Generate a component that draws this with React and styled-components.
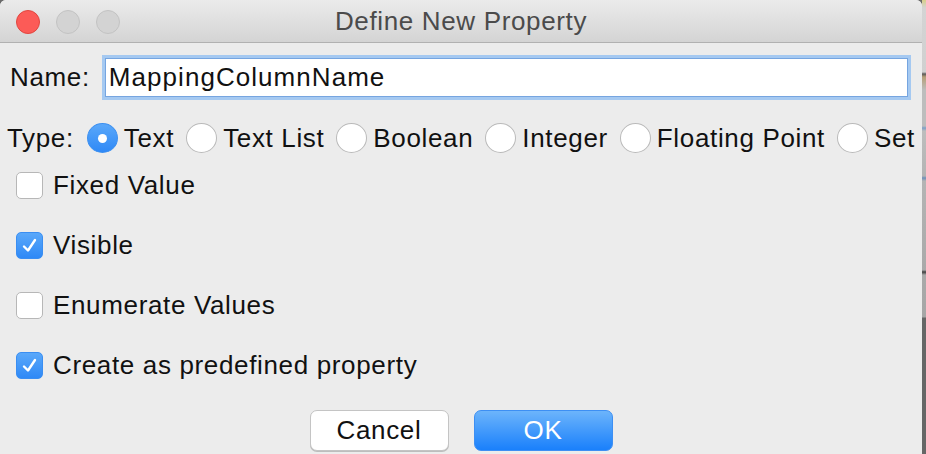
import React from "react";
import styled, { createGlobalStyle } from "styled-components";

const Global = createGlobalStyle`
  html, body { margin: 0; padding: 0; }
  body {
    background: #6a6a6a;
    font-family: "Liberation Sans", Arial, Helvetica, sans-serif;
    overflow: hidden;
  }
`;

const Screen = styled.div`
  display: flex;
  width: 926px;
  height: 454px;
`;

const Backdrop = styled.div`
  flex: 1;
  background: linear-gradient(
    to bottom,
    #d8cf8a 0px,
    #d4d4d4 8px,
    #d0d0d0 72px,
    #5a5a5a 74px,
    #b69f78 77px,
    #bdbdbd 90px,
    #bdbdbd 126px,
    #7e9fc6 128px,
    #bdbdbd 131px,
    #b4b4b4 176px,
    #6f8fb8 178px,
    #b4b4b4 181px,
    #a9a9a9 270px,
    #3e3e3e 272px,
    #a9a9a9 275px,
    #a6a6a6 317px,
    #666666 318px,
    #666666 100%
  );
`;

const Window = styled.div`
  width: 922px;
  height: 454px;
  background: #ececec;
  border-radius: 6px 6px 0 0;
  overflow: hidden;
  display: flex;
  flex-direction: column;
  letter-spacing: 0.65px;
`;

const TitleBar = styled.div`
  height: 42px;
  flex: none;
  display: grid;
  grid-template-columns: 1fr auto 1fr;
  align-items: center;
  background: linear-gradient(to bottom, #ebebeb, #d4d4d4);
  border-bottom: 1px solid #b1b1b1;
`;

const Lights = styled.div`
  display: flex;
  gap: 16px;
  padding-left: 16px;
  padding-top: 1px;
`;

const Light = styled.span`
  width: 24px;
  height: 24px;
  border-radius: 50%;
  box-sizing: border-box;
  background: ${(p) => (p.$red ? "#fc5b57" : "#d3d3d3")};
  border: 1px solid ${(p) => (p.$red ? "#e2463f" : "#c3c3c3")};
`;

const Title = styled.div`
  font-size: 26px;
  color: #4b4b4b;
  white-space: nowrap;
`;

const Content = styled.div`
  display: flex;
  flex-direction: column;
  padding-top: 15px;
  font-size: 26px;
  color: #111;
`;

const NameRow = styled.div`
  display: flex;
  align-items: center;
  padding: 0 14px 0 10px;
  gap: 15px;
`;

const Label = styled.span`
  white-space: nowrap;
`;

const TextField = styled.div`
  flex: 1;
  height: 39px;
  box-sizing: border-box;
  background: #fff;
  border: 1px solid #76a5e0;
  box-shadow: 0 0 0 3px #a5c9f1;
  display: flex;
  align-items: center;
  padding-left: 3px;
  letter-spacing: 1.05px;
  white-space: nowrap;
`;

const TypeRow = styled.div`
  display: flex;
  align-items: center;
  margin-top: 26px;
  padding-left: 7px;
  height: 30px;
  white-space: nowrap;
  overflow: hidden;
`;

const TypeLabel = styled.span`
  margin-right: 13px;
`;

const RadioItem = styled.label`
  display: flex;
  align-items: center;
  gap: 6px;
  margin-right: 12px;
  flex: none;
`;

const RadioDot = styled.span`
  width: 31px;
  height: 30px;
  box-sizing: border-box;
  border-radius: 50%;
  flex: none;
  display: flex;
  align-items: center;
  justify-content: center;
  background: ${(p) =>
    p.$on ? "linear-gradient(to bottom, #5aa8fa, #2f89f6)" : "#fff"};
  border: 1px solid ${(p) => (p.$on ? "#3b8ff0" : "#b9b9b9")};
  &::after {
    content: "";
    display: ${(p) => (p.$on ? "block" : "none")};
    width: 9px;
    height: 9px;
    border-radius: 50%;
    background: #fff;
  }
`;

const Checks = styled.div`
  display: flex;
  flex-direction: column;
  gap: 33px;
  margin-top: 19px;
  padding-left: 16px;
`;

const CheckRow = styled.label`
  display: flex;
  align-items: center;
  gap: 10px;
  height: 27px;
  white-space: nowrap;
`;

const Box = styled.span`
  width: 27px;
  height: 27px;
  box-sizing: border-box;
  border-radius: 5px;
  flex: none;
  display: flex;
  align-items: center;
  justify-content: center;
  background: ${(p) =>
    p.$on ? "linear-gradient(to bottom, #5aa8fa, #2f89f6)" : "#fff"};
  border: 1px solid ${(p) => (p.$on ? "#3a8ef2" : "#b7b7b7")};
`;

const Buttons = styled.div`
  display: flex;
  justify-content: center;
  gap: 25px;
  margin-top: 31px;
`;

const Button = styled.button`
  width: 139px;
  height: 41px;
  box-sizing: border-box;
  border-radius: 7px;
  font-family: "Liberation Sans", Arial, sans-serif;
  font-size: 26px;
  letter-spacing: 0.65px;
  padding: 0;
  color: ${(p) => (p.$primary ? "#fff" : "#111")};
  background: ${(p) =>
    p.$primary ? "linear-gradient(to bottom, #6cb4fb, #1a80fb)" : "#fff"};
  border: 1px solid ${(p) => (p.$primary ? "#3d8ff3" : "#c4c4c4")};
  box-shadow: ${(p) => (p.$primary ? "none" : "0 1px 0 #bdbdbd")};
`;

const Check = () => (
  <svg width="17" height="17" viewBox="0 0 17 17">
    <path
      d="M3 9.5 L7 13.5 L14 3"
      fill="none"
      stroke="#fff"
      strokeWidth="2.4"
      strokeLinecap="round"
      strokeLinejoin="round"
    />
  </svg>
);

const types = ["Text", "Text List", "Boolean", "Integer", "Floating Point", "Set"];
const checks = [
  { label: "Fixed Value", on: false },
  { label: "Visible", on: true },
  { label: "Enumerate Values", on: false },
  { label: "Create as predefined property", on: true },
];

export default function App() {
  return (
    <>
      <Global />
      <Screen>
        <Window>
          <TitleBar>
            <Lights>
              <Light $red />
              <Light />
              <Light />
            </Lights>
            <Title>Define New Property</Title>
            <div />
          </TitleBar>
          <Content>
            <NameRow>
              <Label>Name:</Label>
              <TextField>MappingColumnName</TextField>
            </NameRow>
            <TypeRow>
              <TypeLabel>Type:</TypeLabel>
              {types.map((t, i) => (
                <RadioItem key={t}>
                  <RadioDot $on={i === 0} />
                  {t}
                </RadioItem>
              ))}
            </TypeRow>
            <Checks>
              {checks.map((c) => (
                <CheckRow key={c.label}>
                  <Box $on={c.on}>{c.on && <Check />}</Box>
                  {c.label}
                </CheckRow>
              ))}
            </Checks>
            <Buttons>
              <Button>Cancel</Button>
              <Button $primary>OK</Button>
            </Buttons>
          </Content>
        </Window>
        <Backdrop />
      </Screen>
    </>
  );
}
